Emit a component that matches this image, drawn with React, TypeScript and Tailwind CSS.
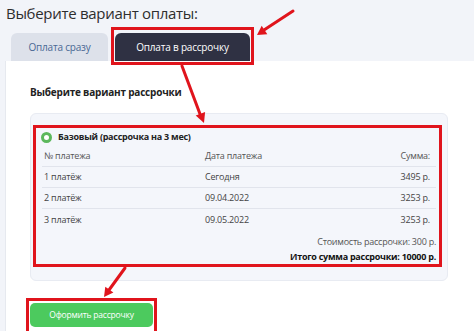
import React from "react";

const rows = [
  { n: "1 платёж", d: "Сегодня", s: "3495 р." },
  { n: "2 платёж", d: "09.04.2022", s: "3253 р." },
  { n: "3 платёж", d: "09.05.2022", s: "3253 р." },
];

export default function App() {
  return (
    <div
      className="relative w-[474px] h-[331px] overflow-hidden bg-[#f2f4f9] flex flex-col"
      style={{ fontFamily: '"Open Sans", "Noto Sans", sans-serif' }}
    >
      <div className="pl-[6px] pt-[2px] h-[24px] text-[15px] tracking-[-0.3px] leading-[22px] text-[#2e2e2e]">
        Выберите вариант оплаты:
      </div>
      <div className="flex items-end gap-[7px] pl-[11px] mt-[9px]">
        <div className="w-[97px] h-[28px] rounded-t-[6px] bg-[#dde1ea] flex items-center justify-center text-[10px] tracking-[-0.2px] text-[#4a6894]">
          Оплата сразу
        </div>
        <div className="w-[135px] h-[28px] rounded-t-[6px] bg-[#2f3143] flex items-center justify-center text-[10px] tracking-[-0.2px] text-white">
          Оплата в рассрочку
        </div>
      </div>
      <div className="ml-[5px] flex-1 bg-white border-l border-[#e6e9ef] pl-[24px] pr-[26px]">
        <div className="mt-[23px] h-[16px] flex items-center text-[10px] tracking-[-0.2px] font-bold text-[#222]">
          Выберите вариант рассрочки
        </div>
        <div className="mt-[13px] h-[168px] rounded-[6px] bg-[#f4f6fb] border border-[#e8ebf2] px-[11px] pt-[15px]">
          <div className="h-[16px] flex items-center gap-[6px] text-[9px] tracking-[-0.25px] font-bold text-[#222]">
            <span className="w-[11px] h-[11px] rounded-full border-[3px] border-[#5cb85c] bg-white -ml-[1px]" />
            <span>Базовый (рассрочка на 3 мес)</span>
          </div>
          <div className="h-[22px] flex items-center border-b border-[#e1e4ec] text-[9px] tracking-[-0.2px] text-[#555] pl-[2px] pr-[6px]">
            <span className="w-[161px]">№ платежа</span>
            <span className="flex-1">Дата платежа</span>
            <span>Сумма:</span>
          </div>
          {rows.map((r, i) => (
            <div
              key={i}
              className={
                "h-[21px] flex items-center text-[9px] tracking-[-0.2px] text-[#444] pl-[2px] pr-[6px] " +
                (i < 2 ? "border-b border-[#e1e4ec]" : "")
              }
            >
              <span className="w-[161px]">{r.n}</span>
              <span className="flex-1">{r.d}</span>
              <span>{r.s}</span>
            </div>
          ))}
          <div className="mt-[4px] h-[15px] flex items-center justify-end text-[9px] tracking-[-0.25px] text-[#555]">
            Стоимость рассрочки: 300 р.
          </div>
          <div className="h-[15px] flex items-center justify-end text-[9px] tracking-[-0.25px] font-bold text-[#111]">
            Итого сумма рассрочки: 10000 р.
          </div>
        </div>
        <div className="mt-[22px] w-[123px] h-[24px] rounded-[5px] bg-[#4cca5e] flex items-center justify-center text-[8.5px] tracking-[-0.2px] text-white">
          Оформить рассрочку
        </div>
      </div>

      <div className="absolute left-[111px] top-[27px] w-[143px] h-[38px] border-[3px] border-[#e0141c]" />
      <div className="absolute left-[33px] top-[125px] w-[409px] h-[142px] border-[3px] border-[#e0141c]" />
      <div className="absolute left-[26px] top-[298px] w-[131px] h-[40px] border-[3px] border-[#e0141c]" />

      <svg className="absolute left-0 top-0" width="474" height="331" viewBox="0 0 474 331">
        <g stroke="#e0141c" strokeWidth="3" strokeLinecap="round">
          <line x1="293" y1="11" x2="264" y2="30" />
          <line x1="182" y1="66" x2="200" y2="114" />
          <line x1="125" y1="268" x2="109" y2="290" />
        </g>
        <g fill="#e0141c">
          <polygon points="257,35 261.7,25.8 267.3,34.2" />
          <polygon points="204,123 205.1,111.9 195.7,115.5" />
          <polygon points="104,297 113.4,292.6 105.3,286.8" />
        </g>
      </svg>
    </div>
  );
}
